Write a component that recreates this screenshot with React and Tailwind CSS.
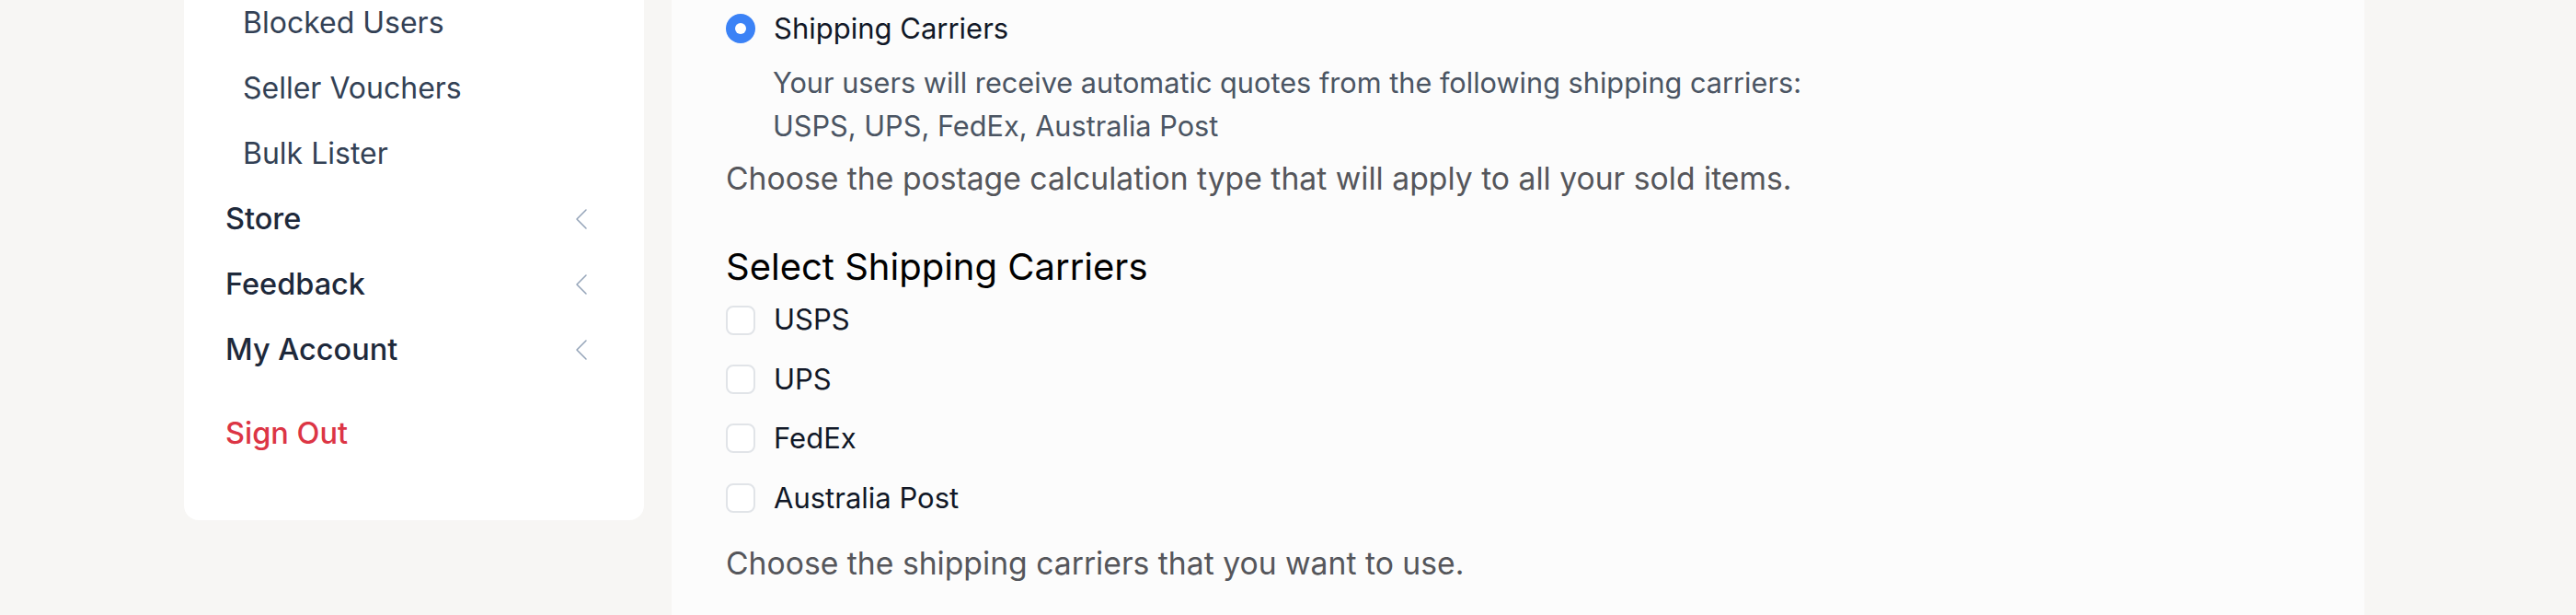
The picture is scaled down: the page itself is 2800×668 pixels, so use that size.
import React from 'react';
import { ChevronLeft } from 'lucide-react';

const subLinks = ['Blocked Users', 'Seller Vouchers', 'Bulk Lister'];
const sections = ['Store', 'Feedback', 'My Account'];
const carriers = ['USPS', 'UPS', 'FedEx', 'Australia Post'];

const Sidebar = () => (
  <aside className="w-[500px] shrink-0 self-start -mt-[10.5px] bg-white rounded-b-2xl pb-[58px]">
    {subLinks.map((label) => (
      <div key={label} className="h-[71px] flex items-center pl-[64px] text-[32px] text-[#334155]">
        {label}
      </div>
    ))}
    {sections.map((label) => (
      <div
        key={label}
        className="h-[71px] flex items-center justify-between pl-[45px] pr-[48px] text-[32.5px] font-medium text-[#1e293b]"
      >
        <span>{label}</span>
        <ChevronLeft className="w-[40px] h-[40px] text-[#94a3b8]" strokeWidth={0.9} />
      </div>
    ))}
    <div className="mt-[20px] h-[71px] flex items-center pl-[45px] text-[32.5px] font-medium text-[#dc3545]">
      Sign Out
    </div>
  </aside>
);

const Checkbox = ({ label }) => (
  <label className="h-[64.4px] flex items-center gap-5 text-[31px] text-[#111827]">
    <span className="w-[32px] h-[32px] shrink-0 rounded-[8px] border-2 border-[#e1e4e8] bg-white" />
    <span>{label}</span>
  </label>
);

const ShippingSettings = () => (
  <main className="w-[1840px] shrink-0 bg-[#fcfcfc] pl-[59px] pt-[7px] pb-[40px]">
    {/* postage type option */}
    <div className="h-[48px] flex items-center gap-5 text-[31px] text-[#111827]">
      <span className="w-[32px] h-[32px] shrink-0 rounded-full bg-[#3b82f6] flex items-center justify-center">
        <span className="w-[12px] h-[12px] rounded-full bg-white" />
      </span>
      <span>Shipping Carriers</span>
    </div>
    <p className="mt-[11px] pl-[51px] text-[30.7px] leading-[47px] text-[#4b5563]">
      Your users will receive automatic quotes from the following shipping carriers:
      <br />
      USPS, UPS, FedEx, Australia Post
    </p>
    <p className="mt-[10px] text-[33.7px] leading-[48px] text-[#55565b]">
      Choose the postage calculation type that will apply to all your sold items.
    </p>

    {/* carrier selection */}
    <h2 className="mt-[48px] text-[40px] leading-[48px] text-black">Select Shipping Carriers</h2>
    <div className="mt-[1.5px] flex flex-col">
      {carriers.map((c) => (
        <Checkbox key={c} label={c} />
      ))}
    </div>
    <p className="mt-[14.5px] text-[33.7px] leading-[48px] text-[#55565b]">
      Choose the shipping carriers that you want to use.
    </p>
  </main>
);

export default function App() {
  return (
    <div className="min-h-[668px] h-[668px] overflow-hidden bg-[#f7f6f4] font-['Inter',sans-serif] flex items-stretch pl-[200px] gap-[30px]">
      <Sidebar />
      <ShippingSettings />
    </div>
  );
}
